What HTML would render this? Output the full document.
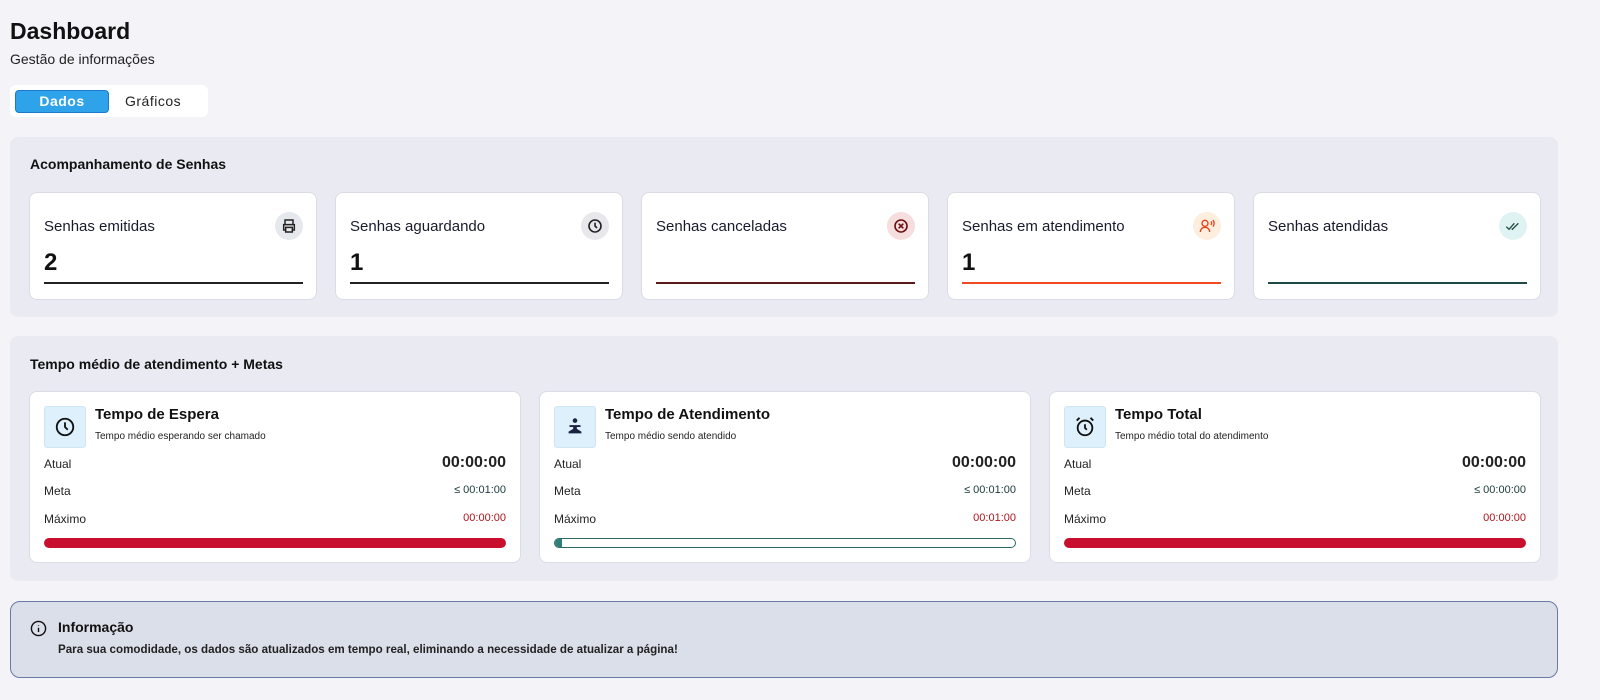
<!DOCTYPE html>
<html><head><meta charset="utf-8"><style>
*{box-sizing:border-box;margin:0;padding:0}
body{width:1600px;height:700px;background:#f3f3f8;font-family:"Liberation Sans",sans-serif;color:#111;position:relative;overflow:hidden}
.abs{position:absolute}
h1{position:absolute;left:10px;top:18px;font-size:23px;font-weight:bold;color:#111}
.sub{left:10px;top:51px;font-size:14px;color:#222}
.tabs{left:10px;top:85px;width:198px;height:32px;background:#fff;border-radius:6px}
.tab1{position:absolute;left:5px;top:5px;width:94px;height:23px;background:#2ea3ea;border:1px solid #1a79cf;border-radius:4px;color:#fff;font-weight:bold;font-size:14px;text-align:center;line-height:21px;letter-spacing:.5px}
.tab2{position:absolute;left:115px;top:5px;font-size:14px;line-height:23px;color:#222;letter-spacing:.5px}
.sec{left:10px;width:1548px;background:#eaeaf3;border-radius:8px}
.sec .t{position:absolute;left:20px;font-size:14px;font-weight:bold;color:#111}
.card{position:absolute;background:#fff;border:1px solid #dcdce6;border-radius:8px}
.c1{top:55px;width:288px;height:108px}
.c1 .l{position:absolute;left:14px;top:25px;font-size:15px;color:#1a1a2e}
.c1 .ic{position:absolute;left:245px;top:19px;width:28px;height:28px;border-radius:50%;display:flex;align-items:center;justify-content:center}
.c1 .n{position:absolute;left:14px;top:56px;font-size:24px;font-weight:bold}
.c1 .ln{position:absolute;left:14px;top:89px;width:259px;height:2px}
.c2{top:55px;width:492px;height:172px}
.c2 .ib{position:absolute;left:14px;top:14px;width:42px;height:42px;background:#ddf0fc;border:1px solid #cfe6f5;border-radius:3px;display:flex;align-items:center;justify-content:center}
.c2 .tt{position:absolute;left:65px;top:14px;font-size:15px;font-weight:bold}
.c2 .st{position:absolute;left:65px;top:39px;font-size:10px;color:#222}
.c2 .r{position:absolute;left:14px;right:14px;font-size:12px;color:#222}
.c2 .r span{position:absolute;right:0}
.bar{position:absolute;left:14px;right:14px;top:146px;height:10px;border-radius:5px}
.info{left:10px;top:601px;width:1548px;height:77px;background:#dbdfea;border:1px solid #6a7aa6;border-radius:10px}
</style></head><body>
<h1>Dashboard</h1>
<div class="abs sub">Gestão de informações</div>
<div class="abs tabs"><div class="tab1">Dados</div><div class="tab2">Gráficos</div></div>

<div class="abs sec" style="top:137px;height:180px">
<div class="t" style="top:19px">Acompanhamento de Senhas</div>
<div class="card c1" style="left:19px"><div class="l">Senhas emitidas</div><div class="ic" style="background:#e5e8ec"><svg width="16" height="16" viewBox="0 0 24 24" fill="none" stroke="#222" stroke-width="2.2"><path d="M6 9V3h12v6M6 18H4v-8h16v8h-2M7 14h10v7H7z"/></svg></div><div class="n">2</div><div class="ln" style="background:#222"></div></div>
<div class="card c1" style="left:325px"><div class="l">Senhas aguardando</div><div class="ic" style="background:#e8e8ec"><svg width="16" height="16" viewBox="0 0 24 24" fill="none" stroke="#222" stroke-width="2.4"><circle cx="12" cy="12" r="9"/><path d="M12 7v5l3 3"/></svg></div><div class="n">1</div><div class="ln" style="background:#222"></div></div>
<div class="card c1" style="left:631px"><div class="l">Senhas canceladas</div><div class="ic" style="background:#f6dede"><svg width="16" height="16" viewBox="0 0 24 24" fill="none" stroke="#6b1010" stroke-width="2.4"><circle cx="12" cy="12" r="9"/><path d="M8.5 8.5l7 7M15.5 8.5l-7 7"/></svg></div><div class="ln" style="background:#5a1a1a"></div></div>
<div class="card c1" style="left:937px"><div class="l">Senhas em atendimento</div><div class="ic" style="background:#fdeede"><svg width="18" height="16" viewBox="0 0 26 24" fill="none" stroke="#e8401a" stroke-width="2"><circle cx="10" cy="8" r="4.5"/><path d="M3 21c0-4 3-7 7-7s7 3 7 7M19 5c1 1.5 1 4 0 5.5M22 3c2 3 2 7 0 10"/></svg></div><div class="n">1</div><div class="ln" style="background:#ef4a22"></div></div>
<div class="card c1" style="left:1243px"><div class="l">Senhas atendidas</div><div class="ic" style="background:#e0f3f3"><svg width="16" height="16" viewBox="0 0 24 24" fill="none" stroke="#1d4a44" stroke-width="2"><path d="M2 13l4 4 8-9M10 16l1 1 9-9"/></svg></div><div class="ln" style="background:#1d4a44"></div></div>
</div>

<div class="abs sec" style="top:336px;height:245px">
<div class="t" style="top:20px">Tempo médio de atendimento + Metas</div>
<div class="card c2" style="left:19px"><div class="ib"><svg width="22" height="22" viewBox="0 0 24 24" fill="none" stroke="#111" stroke-width="2"><circle cx="12" cy="12" r="9"/><path d="M12 7v5l3 3"/></svg></div><div class="tt">Tempo de Espera</div><div class="st">Tempo médio esperando ser chamado</div>
<div class="r" style="top:65px">Atual<span style="font-size:16px;font-weight:bold;top:-3px">00:00:00</span></div>
<div class="r" style="top:92px">Meta<span style="font-size:11px;color:#1a3a3a">≤ 00:01:00</span></div>
<div class="r" style="top:120px">Máximo<span style="font-size:11px;color:#b0141c">00:00:00</span></div>
<div class="bar" style="background:#c8102e"></div></div>
<div class="card c2" style="left:529px"><div class="ib"><svg width="22" height="22" viewBox="0 0 24 24" fill="#1a2240"><circle cx="12" cy="5" r="2.5"/><path d="M6 10h12v2h-4v2l5 3v2H5v-2l5-3v-2H6z"/></svg></div><div class="tt">Tempo de Atendimento</div><div class="st">Tempo médio sendo atendido</div>
<div class="r" style="top:65px">Atual<span style="font-size:16px;font-weight:bold;top:-3px">00:00:00</span></div>
<div class="r" style="top:92px">Meta<span style="font-size:11px;color:#1a3a3a">≤ 00:01:00</span></div>
<div class="r" style="top:120px">Máximo<span style="font-size:11px;color:#b0141c">00:01:00</span></div>
<div class="bar" style="border:1.5px solid #2d6b66;background:#fff"><div style="width:7px;height:100%;background:#2e7f7a;border-radius:4px 0 0 4px"></div></div></div>
<div class="card c2" style="left:1039px"><div class="ib"><svg width="22" height="22" viewBox="0 0 24 24" fill="none" stroke="#111" stroke-width="2"><circle cx="12" cy="13" r="8"/><path d="M12 9v4l2 2M3 5l3-3M21 5l-3-3"/></svg></div><div class="tt">Tempo Total</div><div class="st">Tempo médio total do atendimento</div>
<div class="r" style="top:65px">Atual<span style="font-size:16px;font-weight:bold;top:-3px">00:00:00</span></div>
<div class="r" style="top:92px">Meta<span style="font-size:11px;color:#1a3a3a">≤ 00:00:00</span></div>
<div class="r" style="top:120px">Máximo<span style="font-size:11px;color:#b0141c">00:00:00</span></div>
<div class="bar" style="background:#c8102e"></div></div>
</div>

<div class="abs info">
<svg class="abs" style="left:19px;top:18px" width="17" height="17" viewBox="0 0 24 24" fill="none" stroke="#111" stroke-width="2"><circle cx="12" cy="12" r="10"/><path d="M12 11v6M12 7v1"/></svg>
<div class="abs" style="left:47px;top:17px;font-size:14px;font-weight:bold">Informação</div>
<div class="abs" style="left:47px;top:41px;font-size:11.6px;font-weight:bold;color:#222">Para sua comodidade, os dados são atualizados em tempo real, eliminando a necessidade de atualizar a página!</div>
</div>
</body></html>
